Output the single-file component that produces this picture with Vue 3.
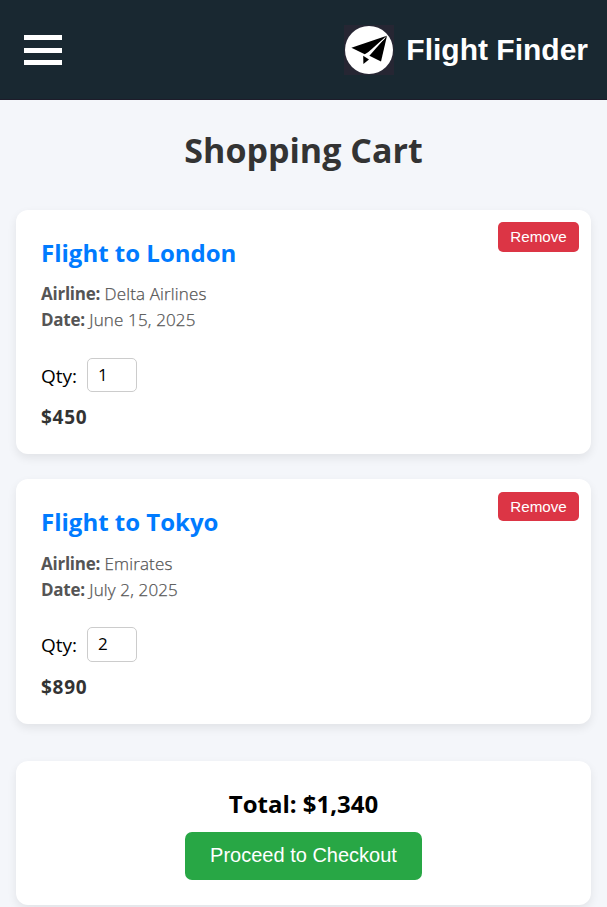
<script setup>
import { computed, ref } from 'vue'

const items = ref([
  { id: 'london', city: 'London', airline: 'Delta Airlines', date: 'June 15, 2025', qty: 1, price: 450 },
  { id: 'tokyo', city: 'Tokyo', airline: 'Emirates', date: 'July 2, 2025', qty: 2, price: 890 },
])

const total = computed(() => items.value.reduce((sum, item) => sum + item.price, 0).toLocaleString('en-US'))

function remove(id) {
  items.value = items.value.filter((item) => item.id !== id)
}
</script>

<template>
  <div class="page">
    <header class="header">
      <button class="menu" aria-label="Menu">
        <span></span>
        <span></span>
        <span></span>
      </button>
      <div class="brand">
        <svg class="logo" viewBox="0 0 50 50" aria-hidden="true">
          <rect width="50" height="50" fill="#262633" />
          <circle cx="25" cy="25" r="24" fill="#fff" />
          <path d="M42.8 10.8 7.4 22.8 20.8 29.2 24.4 27Z" fill="#000" />
          <path d="M43 10.8 25.4 30.8 37 36.6Z" fill="#000" />
          <path d="M19.2 30.8 25 34.6 19.4 38.9Z" fill="#000" />
          <path d="M41 13.2 24 28.8" stroke="#fff" stroke-width="0.8" />
        </svg>
        <span class="brand-name">Flight Finder</span>
      </div>
    </header>

    <main class="cart">
      <h1 class="title">Shopping Cart</h1>

      <section v-for="item in items" :key="item.id" class="card item">
        <button class="remove" @click="remove(item.id)">Remove</button>
        <h2 class="name">Flight to {{ item.city }}</h2>
        <p class="detail"><strong>Airline:</strong> <span>{{ item.airline }}</span></p>
        <p class="detail"><strong>Date:</strong> <span>{{ item.date }}</span></p>
        <div class="quantity">
          <label :for="item.id">Qty:</label>
          <input :id="item.id" v-model="item.qty" type="text" />
        </div>
        <p class="price">${{ item.price }}</p>
      </section>

      <section class="card summary">
        <h2 class="total">Total: ${{ total }}</h2>
        <button class="checkout">Proceed to Checkout</button>
      </section>
    </main>
  </div>
</template>

<style>
body {
  background: #f4f6fa;
  overflow: hidden;
}
</style>

<style scoped>
.page {
  height: 907px;
  overflow: hidden;
  background: #f4f6fa;
  font-family: "Open Sans", "Noto Sans", sans-serif;
  color: #000;
}

h1, h2, p {
  margin: 0;
}

button {
  border: 0;
  padding: 0;
  color: #fff;
  font-family: "Liberation Sans", Arial, sans-serif;
  cursor: pointer;
}

.header {
  display: flex;
  align-items: center;
  justify-content: space-between;
  box-sizing: border-box;
  height: 100px;
  padding: 1px 19px 0 24px;
  background: #192831;
  border-bottom: 1px solid #1d1c2a;
}

.menu {
  display: grid;
  grid-template-rows: 5px 5px 5px;
  row-gap: 7.5px;
  width: 38px;
  background: none;
}

.menu span {
  background: #fff;
}

.brand {
  display: flex;
  align-items: center;
  gap: 12px;
}

.logo {
  width: 50px;
  height: 50px;
}

.brand-name {
  font: bold 30px/50px "Liberation Sans", Arial, sans-serif;
  color: #fff;
}

.cart {
  padding: 0 16px;
}

.title {
  height: 110px;
  line-height: 100px;
  font-size: 34px;
  font-weight: 700;
  text-align: center;
  color: #333;
}

.card {
  box-sizing: border-box;
  background: #fff;
  border-radius: 12px;
  box-shadow: 0 4px 10px rgba(0, 0, 0, 0.08);
}

.item {
  position: relative;
  height: 244.4px;
  margin-bottom: 25px;
  padding: 25px;
}

.remove {
  position: absolute;
  top: 12.2px;
  right: 12px;
  width: 81px;
  height: 29.4px;
  border-radius: 5px;
  background: #dc3545;
  font-size: 15.2px;
  line-height: 29.4px;
}

.name {
  margin-bottom: 11.3px;
  line-height: 35px;
  font-size: 24px;
  font-weight: 700;
  color: #007bff;
}

.detail {
  line-height: 26px;
  font-size: 17px;
  color: #555;
}

.detail strong {
  letter-spacing: -0.25px;
}

.detail span {
  font-weight: 300;
  letter-spacing: 0.15px;
  -webkit-text-stroke: 0.25px #555;
}

.quantity {
  display: flex;
  align-items: center;
  gap: 10px;
  height: 34.2px;
  margin-top: 24.7px;
  font-size: 19px;
}

.quantity label {
  padding-top: 1.6px;
}

.quantity input {
  box-sizing: border-box;
  width: 50px;
  height: 34.2px;
  padding: 0 10px 2px;
  border: 1px solid #ccc;
  border-radius: 5px;
  font: 17px "Open Sans", sans-serif;
}

.price {
  margin-top: 11px;
  line-height: 28px;
  font-size: 19px;
  font-weight: 700;
  letter-spacing: 0.7px;
  color: #333;
}

.summary {
  height: 144px;
  margin-top: 37px;
  padding-top: 26px;
  text-align: center;
}

.total {
  height: 45px;
  line-height: 34px;
  font-size: 24px;
  font-weight: 700;
}

.checkout {
  width: 237px;
  height: 48px;
  padding-bottom: 1px;
  border-radius: 7px;
  background: #28a745;
  font-size: 20px;
}
</style>
